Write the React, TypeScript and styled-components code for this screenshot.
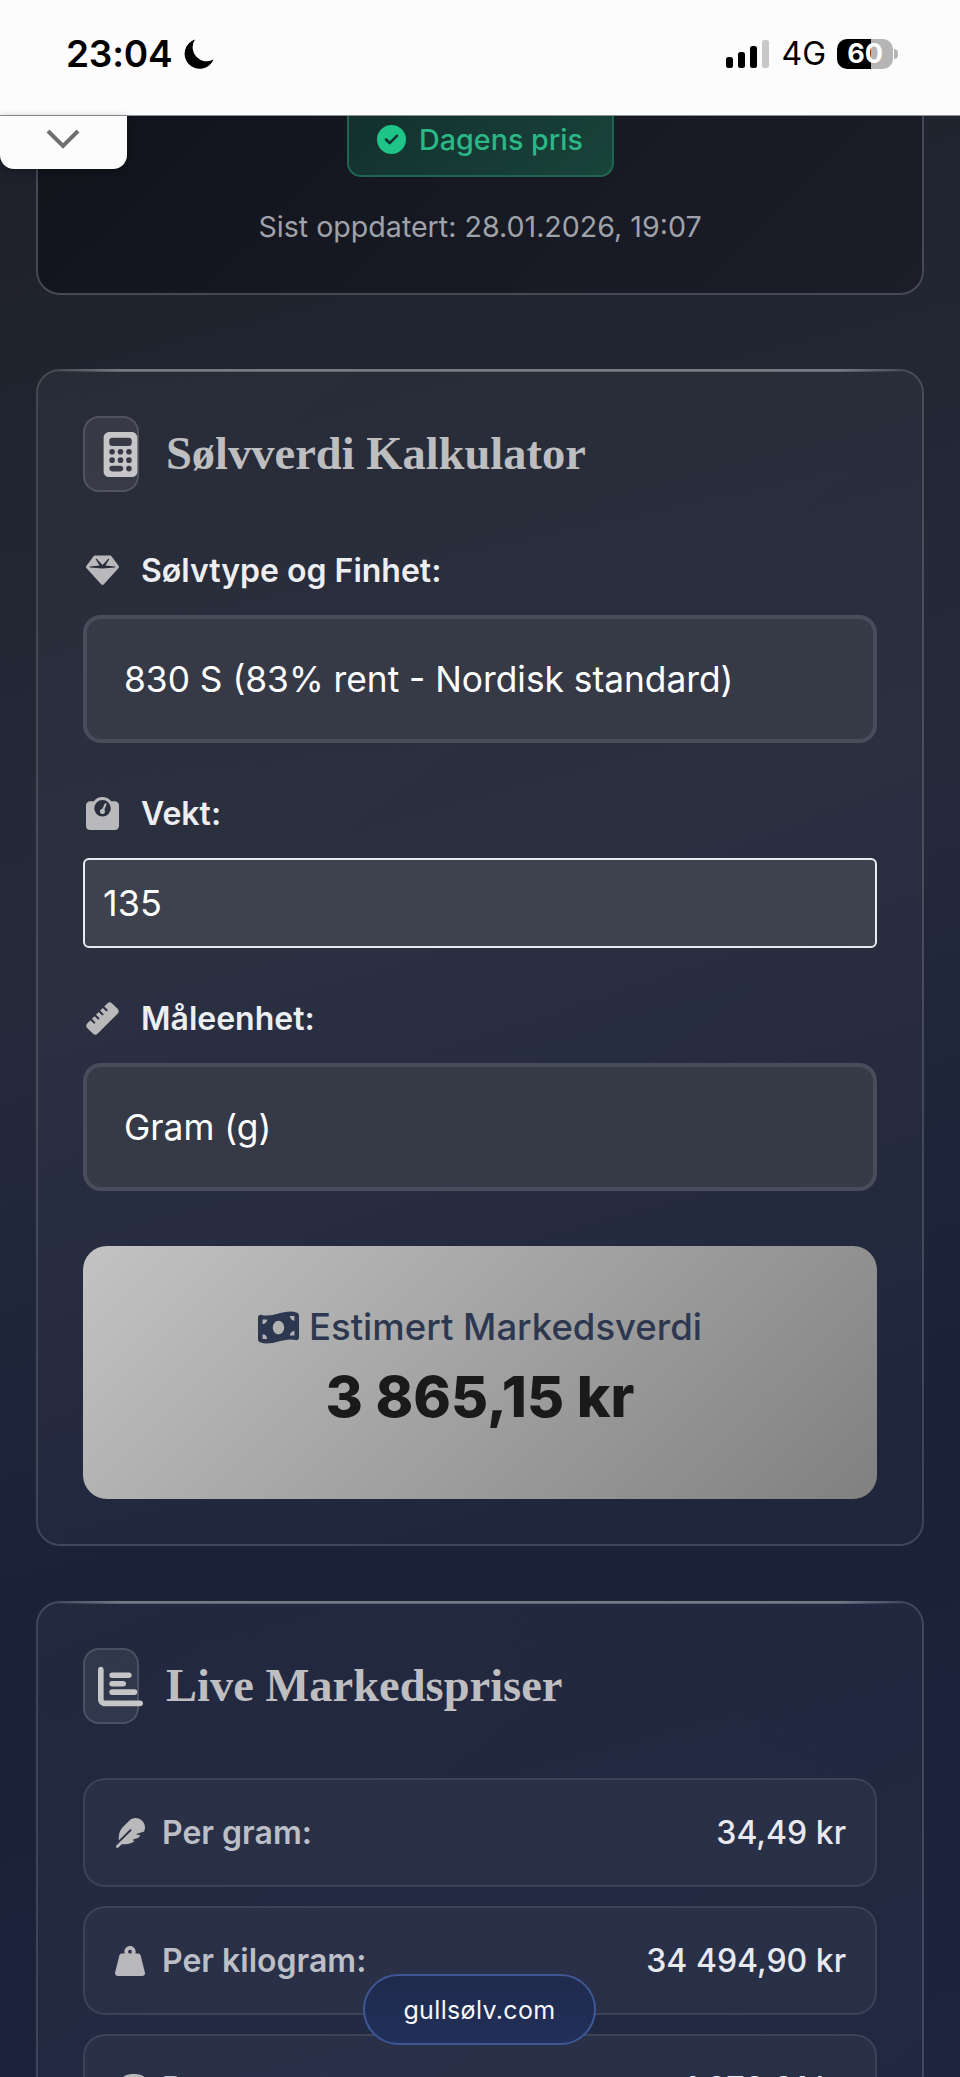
import React from "react";
import styled, { createGlobalStyle } from "styled-components";
import { FaCalculator, FaGem, FaWeightScale, FaRuler, FaMoneyBillWave, FaChartBar, FaFeather, FaWeightHanging, FaCoins, FaCircleCheck } from "react-icons/fa6";

const Global = createGlobalStyle`
  html, body { margin: 0; padding: 0; background: #1a2036; }
  * { box-sizing: border-box; }
  body { font-family: Inter, "Liberation Sans", sans-serif; }
`;

const Page = styled.div`
  position: relative;
  width: 960px;
  height: 2077px;
  overflow: hidden;
  background: linear-gradient(165deg, #1c1e29 0%, #20242f 16%, #252a3b 42%, #1a2138 72%, #1c243e 100%);
`;

const StatusBar = styled.header`
  height: 116px;
  background: #fcfcfc;
  display: flex;
  align-items: flex-start;
  justify-content: space-between;
  padding: 31px 62px 0 66px;
  color: #000;
  border-bottom: 1px solid #8f929c;
`;

const TimeGroup = styled.div`
  display: flex;
  align-items: center;
  gap: 12px;
`;

const Time = styled.span`
  font-size: 37px;
  font-weight: 600;
  line-height: 46px;
  letter-spacing: -0.2px;
`;

const Moon = styled.svg`
  width: 30px;
  height: 30px;
`;

const StatusRight = styled.div`
  display: flex;
  align-items: center;
  height: 46px;
`;

const Signal = styled.svg`
  width: 44px;
  height: 28px;
  margin-right: 11px;
`;

const Network = styled.span`
  font-size: 32px;
  font-weight: 400;
  margin-right: 11px;
  line-height: 46px;
`;

const Battery = styled.div`
  position: relative;
  width: 56px;
  height: 30px;
  border-radius: 10px;
  background: linear-gradient(90deg, #000 0 60%, #b5b5b5 60% 100%);
  color: #fff;
  font-size: 27px;
  font-weight: 700;
  line-height: 30px;
  text-align: center;
  margin-right: 5px;

  &::after {
    content: "";
    position: absolute;
    right: -5px;
    top: 10px;
    width: 4px;
    height: 10px;
    border-radius: 0 4px 4px 0;
    background: #b5b5b5;
  }
`;

const CollapseTab = styled.div`
  position: absolute;
  left: 0;
  top: 116px;
  width: 127px;
  height: 53px;
  background: #fcfcfc;
  border-radius: 0 0 14px 14px;
  box-shadow: 0 2px 8px rgba(0, 0, 0, 0.35);
  display: flex;
  justify-content: center;
  padding: 12px 1px 0 0;
`;

const Chevron = styled.svg`
  width: 34px;
  height: 22px;
`;

const HeroCard = styled.section`
  margin: 0 36px 74px;
  height: 179px;
  padding: 0;
  border: 2px solid #464955;
  border-top: 0;
  border-radius: 0 0 24px 24px;
  background: linear-gradient(135deg, #12141c 0%, #1b1d29 100%);
  display: flex;
  flex-direction: column;
  align-items: center;
`;

const Badge = styled.div`
  width: 267px;
  height: 61px;
  background: linear-gradient(135deg, #13302d, #18443a);
  border: 2px solid #1f6652;
  border-top: 0;
  border-radius: 0 0 14px 14px;
  color: #2bb786;
  font-size: 28.7px;
  font-weight: 500;
  display: flex;
  align-items: center;
  justify-content: center;
  gap: 13px;
  padding-bottom: 13px;
`;

const BadgeIcon = styled(FaCircleCheck)`
  width: 29px;
  height: 29px;
  color: #1fc488;
`;

const Updated = styled.p`
  margin: 30px 0 0;
  color: #a0a2aa;
  font-size: 28.6px;
  line-height: 40px;
  font-weight: 400;
`;

const Card = styled.section`
  position: relative;
  margin: 0 36px 55px;
  padding: 45px;
  border: 2px solid rgba(255, 255, 255, 0.14);
  border-radius: 24px;
  background: linear-gradient(145deg, rgba(255, 255, 255, 0.04), rgba(255, 255, 255, 0.022));

  &::before {
    content: "";
    position: absolute;
    top: -2px;
    left: 14px;
    right: 14px;
    height: 3px;
    background: linear-gradient(90deg, transparent, rgba(255, 255, 255, 0.28) 8%, rgba(255, 255, 255, 0.28) 92%, transparent);
  }
`;

const CardHeader = styled.div`
  display: flex;
  align-items: center;
  gap: 27px;
  height: 76px;
`;

const IconBox = styled.div`
  width: 56px;
  height: 76px;
  flex-shrink: 0;
  border: 2px solid rgba(255, 255, 255, 0.13);
  border-radius: 16px;
  background: rgba(255, 255, 255, 0.07);
  display: flex;
  align-items: center;
  padding-left: 13px;
  color: #c6c6c8;

  svg {
    height: 45px;
    width: auto;
    flex-shrink: 0;
  }
`;

const Title = styled.h2`
  margin: 0;
  font-family: "Liberation Serif", serif;
  font-weight: 700;
  font-size: 46.5px;
  line-height: 60px;
  color: #bebec0;
  white-space: nowrap;
`;

const Form = styled.div`
  padding-top: 58px;
`;

const Field = styled.div`
  margin-bottom: 50px;
`;

const FieldLabel = styled.label`
  display: flex;
  align-items: center;
  height: 40px;
  margin-bottom: 25px;
  gap: 22px;
  color: #eceef2;
  font-size: 32px;
  font-weight: 600;
  padding-left: 3px;

  svg {
    width: 33px;
    height: 33px;
    color: #b9b9bb;
    flex-shrink: 0;
  }
`;

const SelectBox = styled.select`
  display: block;
  width: 100%;
  height: 128px;
  padding: 0 37px;
  appearance: none;
  border: 4px solid #484c5b;
  border-radius: 18px;
  background: #363a47;
  color: #fff;
  font-family: inherit;
  font-size: 35.3px;
  font-weight: 400;
  outline: none;
`;

const NumberInput = styled.input`
  display: block;
  width: 100%;
  height: 90px;
  padding: 0 18px;
  border: 2px solid #e8eaf0;
  border-radius: 6px;
  background: #3e414e;
  color: #fff;
  font-family: inherit;
  font-size: 36px;
  outline: none;
`;

const Result = styled.div`
  height: 253px;
  margin-top: 55px;
  border-radius: 24px;
  background: linear-gradient(135deg, #c3c3c3 0%, #808080 100%);
  display: flex;
  flex-direction: column;
  align-items: center;
  justify-content: center;
  padding-bottom: 3px;
`;

const ResultLabel = styled.div`
  display: flex;
  align-items: center;
  gap: 10px;
  color: #2d3850;
  font-size: 36.5px;
  font-weight: 500;
  line-height: 52px;

  svg {
    width: 41px;
    height: 41px;
  }
`;

const ResultValue = styled.div`
  color: #1a1a1a;
  font-size: 57px;
  font-weight: 800;
  line-height: 88px;
`;

const PriceList = styled.div`
  padding-top: 54px;
  display: flex;
  flex-direction: column;
  gap: 19px;
`;

const PriceRow = styled.div`
  display: flex;
  align-items: center;
  justify-content: space-between;
  height: 109px;
  padding: 0 29px 0 30px;
  border: 2px solid rgba(255, 255, 255, 0.09);
  border-radius: 22px;
  background: rgba(255, 255, 255, 0.035);
`;

const PriceLabel = styled.div`
  display: flex;
  align-items: center;
  gap: 17px;
  color: #bcbfc6;
  font-size: 32px;
  font-weight: 600;

  svg {
    width: 30px;
    height: 30px;
    flex-shrink: 0;
    color: #b9b9bb;
  }
`;

const PriceValue = styled.div`
  color: #e7e9ee;
  font-size: 32px;
  font-weight: 500;
`;

const SitePill = styled.div`
  position: absolute;
  left: 363px;
  top: 1974px;
  width: 233px;
  height: 71px;
  border: 2px solid #3e5796;
  border-radius: 36px;
  background: linear-gradient(180deg, #1f2a4c, #21305a);
  color: #f6f7f9;
  font-size: 25px;
  font-weight: 400;
  letter-spacing: 0.35px;
  display: flex;
  align-items: center;
  justify-content: center;
`;

const prices = [
  { icon: <FaFeather />, label: "Per gram:", value: "34,49 kr" },
  { icon: <FaWeightHanging />, label: "Per kilogram:", value: "34 494,90 kr" },
  { icon: <FaCoins />, label: "Per troy unse:", value: "1 072,91 kr" },
];

export default function App() {
  return (
    <Page>
      <Global />
      <StatusBar>
        <TimeGroup>
          <Time>23:04</Time>
          <Moon viewBox="0 0 30 30">
            <path d="M11 0.5A15 15 0 1 0 29.5 20.5A14 14 0 0 1 11 0.5Z" fill="#000" />
          </Moon>
        </TimeGroup>
        <StatusRight>
          <Signal viewBox="0 0 44 28">
            <rect x="0" y="17" width="7" height="11" rx="2.5" fill="#000" />
            <rect x="12" y="12" width="7" height="16" rx="2.5" fill="#000" />
            <rect x="24" y="6" width="7" height="22" rx="2.5" fill="#000" />
            <rect x="36" y="0" width="7" height="28" rx="2.5" fill="#c8c8c8" />
          </Signal>
          <Network>4G</Network>
          <Battery>60</Battery>
        </StatusRight>
      </StatusBar>
      <CollapseTab>
        <Chevron viewBox="0 0 34 22">
          <path d="M2 3L17 18L32 3" fill="none" stroke="#6f6f6f" strokeWidth="4" />
        </Chevron>
      </CollapseTab>

      <HeroCard>
        <Badge>
          <BadgeIcon />
          Dagens pris
        </Badge>
        <Updated>Sist oppdatert: 28.01.2026, 19:07</Updated>
      </HeroCard>

      <Card>
        <CardHeader>
          <IconBox><FaCalculator /></IconBox>
          <Title>Sølvverdi Kalkulator</Title>
        </CardHeader>
        <Form>
          <Field>
            <FieldLabel><FaGem />Sølvtype og Finhet:</FieldLabel>
            <SelectBox defaultValue="830">
              <option value="830">830 S (83% rent - Nordisk standard)</option>
            </SelectBox>
          </Field>
          <Field>
            <FieldLabel><FaWeightScale />Vekt:</FieldLabel>
            <NumberInput type="text" defaultValue="135" />
          </Field>
          <FieldLabel><FaRuler />Måleenhet:</FieldLabel>
          <SelectBox defaultValue="g">
            <option value="g">Gram (g)</option>
          </SelectBox>
        </Form>
        <Result>
          <ResultLabel><FaMoneyBillWave />Estimert Markedsverdi</ResultLabel>
          <ResultValue>3 865,15 kr</ResultValue>
        </Result>
      </Card>

      <Card>
        <CardHeader>
          <IconBox><FaChartBar /></IconBox>
          <Title>Live Markedspriser</Title>
        </CardHeader>
        <PriceList>
          {prices.map((p) => (
            <PriceRow key={p.label}>
              <PriceLabel>{p.icon}{p.label}</PriceLabel>
              <PriceValue>{p.value}</PriceValue>
            </PriceRow>
          ))}
        </PriceList>
      </Card>

      <SitePill>gullsølv.com</SitePill>
    </Page>
  );
}
